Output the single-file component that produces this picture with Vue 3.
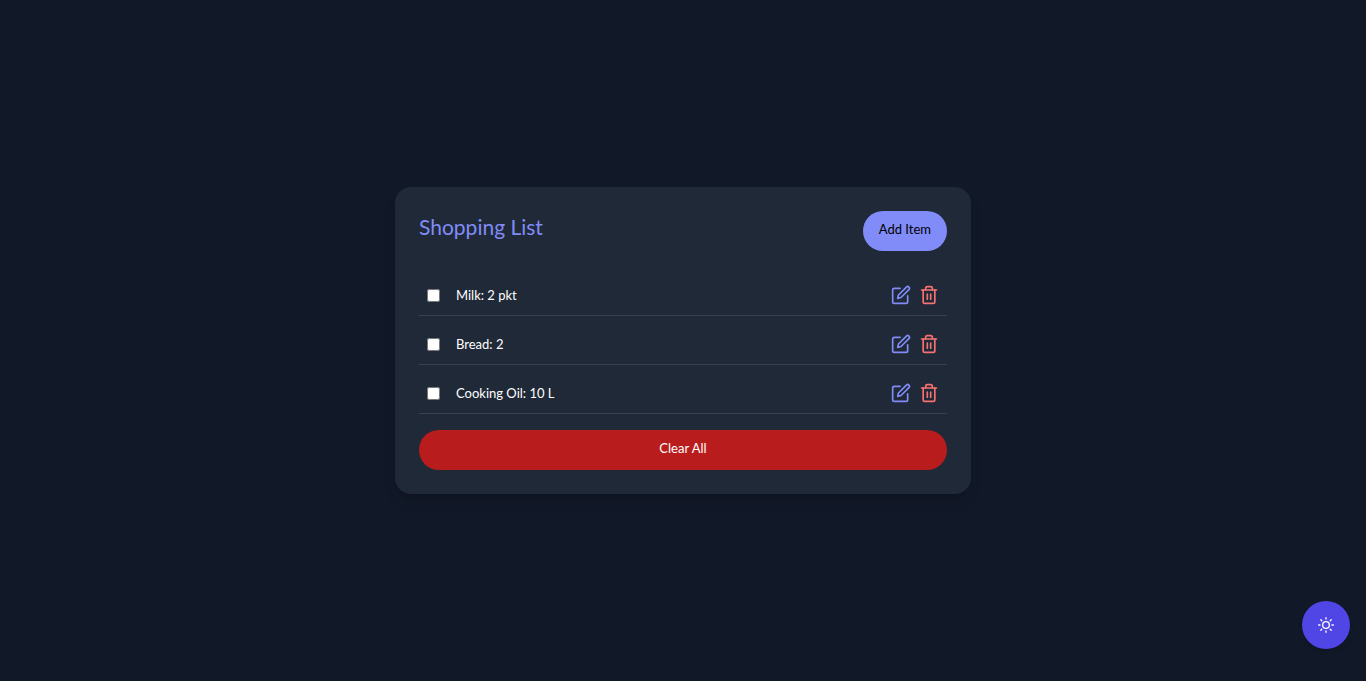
<script setup>
import { ref } from 'vue'

const items = ref([
  { id: 1, name: 'Milk', quantity: '2 pkt', done: false },
  { id: 2, name: 'Bread', quantity: '2', done: false },
  { id: 3, name: 'Cooking Oil', quantity: '10 L', done: false }
])

function remove(id) {
  items.value = items.value.filter((item) => item.id !== id)
}
</script>

<template>
  <main class="page">
    <section class="card">
      <header class="header">
        <h1 class="title">Shopping List</h1>
        <button class="btn add" type="button">Add Item</button>
      </header>
      <ul class="list">
        <li v-for="item in items" :key="item.id" class="item">
          <input :id="`item-${item.id}`" v-model="item.done" class="check" type="checkbox" />
          <label class="label" :for="`item-${item.id}`">{{ item.name }}: {{ item.quantity }}</label>
          <div class="actions">
            <button class="icon-btn edit" type="button" aria-label="Edit">
              <svg class="icon" viewBox="0 0 24 24">
                <path d="M11 4H4a2 2 0 0 0-2 2v14a2 2 0 0 0 2 2h14a2 2 0 0 0 2-2v-7" />
                <path d="M18.5 2.5a2.121 2.121 0 0 1 3 3L12 15l-4 1 1-4 9.5-9.5z" />
              </svg>
            </button>
            <button class="icon-btn delete" type="button" aria-label="Delete" @click="remove(item.id)">
              <svg class="icon" viewBox="0 0 24 24">
                <path d="M3 6h18" />
                <path d="M19 6v14a2 2 0 0 1-2 2H7a2 2 0 0 1-2-2V6m3 0V4a2 2 0 0 1 2-2h4a2 2 0 0 1 2 2v2" />
                <path d="M10 11v6M14 11v6" />
              </svg>
            </button>
          </div>
        </li>
      </ul>
      <button class="btn clear" type="button" @click="items = []">Clear All</button>
    </section>
    <button class="theme" type="button" aria-label="Toggle theme">
      <svg class="sun" viewBox="0 0 24 24">
        <circle cx="12" cy="12" r="5" />
        <path d="M12 1v2M12 21v2M4.22 4.22l1.42 1.42M18.36 18.36l1.42 1.42M1 12h2M21 12h2M4.22 19.78l1.42-1.42M18.36 5.64l1.42-1.42" />
      </svg>
    </button>
  </main>
</template>

<style>
body {
  margin: 0;
  background: #111827;
}
</style>

<style scoped>
.page {
  box-sizing: border-box;
  min-height: 100vh;
  padding: 16px;
  display: flex;
  align-items: center;
  justify-content: center;
  background: #111827;
  color: #fff;
  font-family: Lato, "Open Sans", sans-serif;
  font-size: 13px;
  line-height: 24px;
}
.card {
  box-sizing: border-box;
  width: 100%;
  max-width: 576px;
  padding: 24px;
  border-radius: 16px;
  background: #1f2937;
  box-shadow: 0 10px 15px -3px rgba(0, 0, 0, 0.1), 0 4px 6px -4px rgba(0, 0, 0, 0.1);
}
.header {
  display: flex;
  align-items: flex-start;
  justify-content: space-between;
  margin-bottom: 24px;
}
.title {
  margin: 0;
  color: #818cf8;
  font-size: 21px;
  font-weight: 400;
  line-height: 32px;
}
button {
  border: 0;
  font: inherit;
  cursor: pointer;
}
.btn {
  height: 40px;
  padding: 6px 16px 10px;
  border-radius: 20px;
}
.add {
  background: #818cf8;
  color: #000;
}
.clear {
  width: 100%;
  background: #b91c1c;
  color: #fff;
}
.list {
  display: flex;
  flex-direction: column;
  gap: 8px;
  margin: 0 0 16px;
  padding: 0;
  list-style: none;
}
.item {
  display: flex;
  align-items: center;
  padding: 8px;
  border-bottom: 1px solid #374151;
}
.check {
  width: 13px;
  height: 13px;
  margin: 0 16px 0 0;
}
.label {
  flex: 1;
}
.actions {
  display: flex;
  gap: 8px;
}
.icon-btn {
  display: flex;
  padding: 0;
  background: none;
}
.edit {
  color: #818cf8;
}
.delete {
  color: #f87171;
}
.icon,
.sun {
  width: 20px;
  height: 20px;
  fill: none;
  stroke: currentColor;
  stroke-width: 2;
  stroke-linecap: round;
  stroke-linejoin: round;
}
.sun {
  width: 16px;
  height: 16px;
}
.theme {
  position: fixed;
  right: 16px;
  bottom: 32px;
  width: 48px;
  height: 48px;
  padding: 0;
  display: flex;
  align-items: center;
  justify-content: center;
  border-radius: 50%;
  background: #4f46e5;
  color: #fff;
  box-shadow: 0 4px 6px -1px rgba(0, 0, 0, 0.1), 0 2px 4px -2px rgba(0, 0, 0, 0.1);
}
</style>
